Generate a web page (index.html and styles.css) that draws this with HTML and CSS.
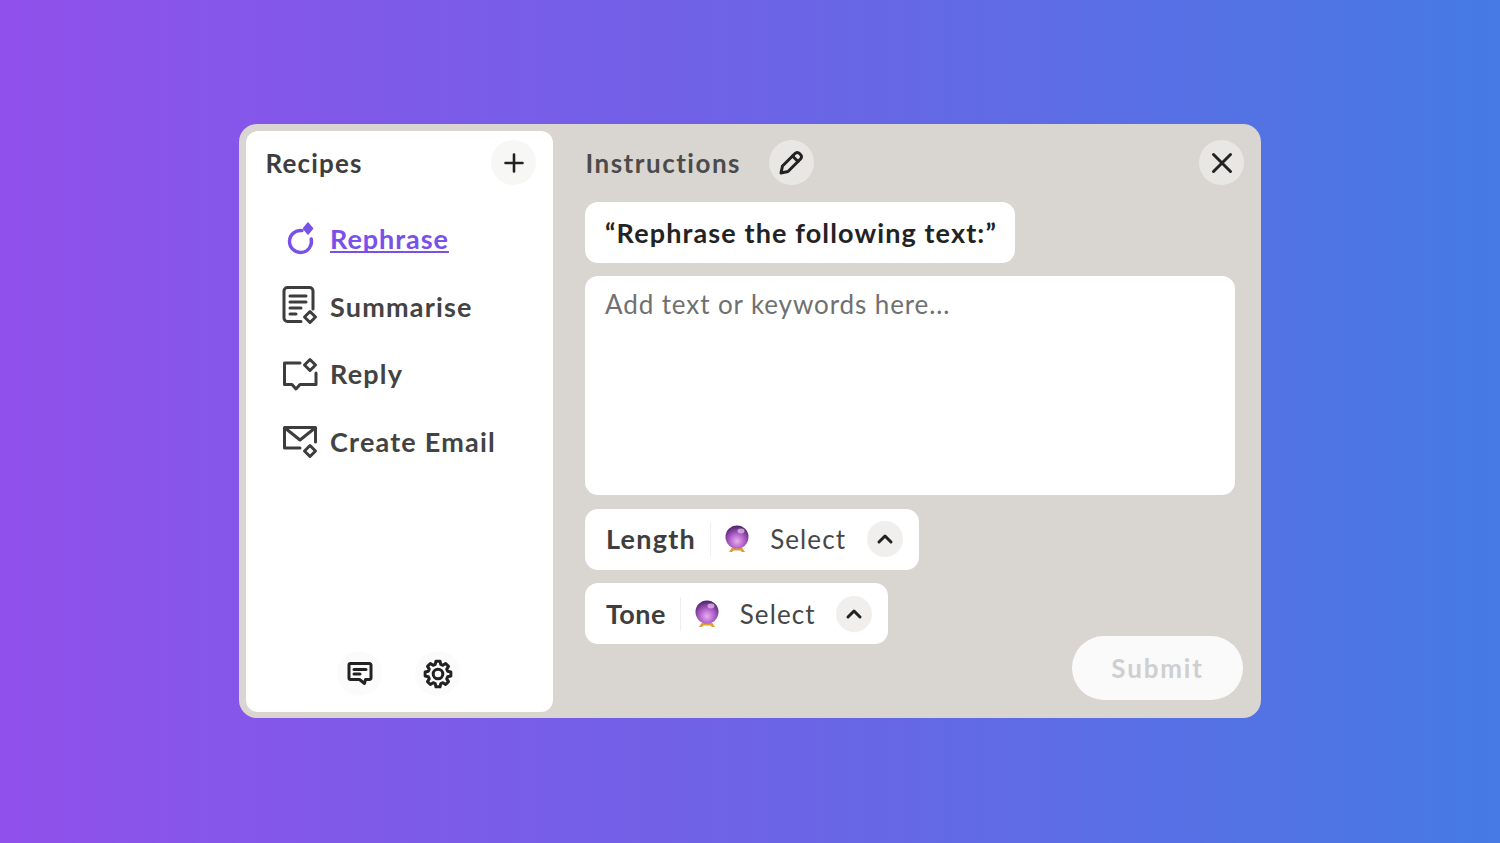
FILE: index.html
```html
<!DOCTYPE html>
<html lang="en">
<head>
<meta charset="utf-8">
<title>Recipes</title>
<link rel="stylesheet" href="styles.css">
</head>
<body>
<svg class="defs" width="0" height="0" aria-hidden="true">
  <defs>
    <radialGradient id="orb" cx="0.5" cy="0.68" r="0.68">
      <stop offset="0" stop-color="#e8b0ee"/>
      <stop offset="0.5" stop-color="#ad5cc8"/>
      <stop offset="1" stop-color="#4a2064"/>
    </radialGradient>
    <symbol id="ball" viewBox="0 0 24 28">
      <path d="M7 22.500h10l3 4.500h-3l-1.500-1.500h-7L7 27H4z" fill="#dd9f2e"/>
      <circle cx="12" cy="12" r="11.500" fill="url(#orb)"/>
      <ellipse cx="16" cy="6" rx="3.500" ry="2.400" fill="#e9c7ef" opacity=".7"/>
    </symbol>
  </defs>
</svg>
<main class="window">
  <aside class="sidebar">
    <header class="side-head">
      <h2 class="title">Recipes</h2>
      <button class="round round-light" aria-label="Add">
        <svg width="24" height="24" viewBox="0 0 24 24" class="ico"><path d="M12 3.500v17M3.500 12h17"/></svg>
      </button>
    </header>
    <nav class="recipes">
      <a class="recipe active">
        <svg width="40" height="40" viewBox="0 0 40 40" class="ico thick">
          <path d="M21 11.600A11 11 0 1 0 30.200 20"/>
          <path d="M27 4l4.500 5.500L27 15l-4.500-5.500z" class="fillme"/>
        </svg>
        <span>Rephrase</span>
      </a>
      <a class="recipe">
        <svg width="40" height="40" viewBox="0 0 40 40" class="ico dark">
          <path d="M20 35.500H6.500a3.500 3.500 0 0 1-3.500-3.500V5a3.500 3.500 0 0 1 3.500-3.500h22A3.500 3.500 0 0 1 32 5v18"/>
          <path d="M9 10h16M9 16h16M9 22h11M9 28h6"/>
          <path d="M29 25.500l5.500 5.500-5.500 5.500-5.500-5.500z"/>
        </svg>
        <span>Summarise</span>
      </a>
      <a class="recipe">
        <svg width="40" height="40" viewBox="0 0 40 40" class="ico dark">
          <path d="M19 9H3.500v21.500h7.500l4 4.500 4-4.500H35V19"/>
          <path d="M29 5.500l5.500 5.500-5.500 5.500-5.500-5.500z"/>
        </svg>
        <span>Reply</span>
      </a>
      <a class="recipe">
        <svg width="40" height="40" viewBox="0 0 40 40" class="ico dark">
          <path d="M19 26H3.500V5.500h31V20"/>
          <path d="M4 6l15 12 15-12"/>
          <path d="M29 23.500l5.500 5.500-5.500 5.500-5.500-5.500z"/>
        </svg>
        <span>Create Email</span>
      </a>
    </nav>
    <footer class="side-foot">
      <button class="round round-light" aria-label="Feedback">
        <svg width="28" height="28" viewBox="0 0 28 28" class="ico heavy">
          <path d="M4.500 3.500h19a1.500 1.500 0 0 1 1.500 1.500v13a1.500 1.500 0 0 1-1.500 1.500h-4l-1 4-5-4h-9A1.500 1.500 0 0 1 3 18V5a1.500 1.500 0 0 1 1.500-1.500z"/>
          <path d="M8 9.500h12M8 14h6"/>
        </svg>
      </button>
      <button class="round round-light" aria-label="Settings">
        <svg width="30" height="30" viewBox="0 0 30 30" class="ico heavy">
          <path d="M12.970 2.160h4.060l.73 3.230 2.090.860 2.790-1.770 2.880 2.880-1.770 2.790.860 2.090 3.230.730v4.060l-3.230.730-.860 2.090 1.770 2.790-2.880 2.880-2.790-1.770-2.090.860-.730 3.230h-4.060l-.730-3.230-2.090-.860-2.790 1.770-2.880-2.880 1.770-2.790-.860-2.090-3.230-.730v-4.060l3.230-.730.860-2.090-1.770-2.790 2.880-2.880 2.790 1.770 2.090-.860z"/>
          <circle cx="15" cy="15" r="4.800"/>
        </svg>
      </button>
    </footer>
  </aside>
  <section class="panel">
    <header class="panel-head">
      <h2 class="title title-muted">Instructions</h2>
      <button class="round round-tint" aria-label="Edit">
        <svg width="28" height="28" viewBox="0 0 28 28" class="ico heavy">
          <path d="M4 24l1.500-7L18 4.500a3 3 0 0 1 4.500 0l1 1a3 3 0 0 1 0 4.500L11 22.500z"/>
          <path d="M15.500 7l5.500 5.500"/>
        </svg>
      </button>
      <button class="round round-tint close" aria-label="Close">
        <svg width="24" height="24" viewBox="0 0 24 24" class="ico heavy"><path d="M3.500 3.500l17 17M20.500 3.500l-17 17"/></svg>
      </button>
    </header>
    <div class="prompt">“Rephrase the following text:”</div>
    <div class="input">Add text or keywords here...</div>
    <div class="chip">
      <span class="chip-label">Length</span>
      <span class="chip-value">
        <svg class="orb" width="24" height="28"><use href="#ball"/></svg>
        <span class="chip-text">Select</span>
      </span>
      <button class="round round-small" aria-label="Open">
        <svg width="18" height="18" viewBox="0 0 18 18" class="ico heavy"><path d="M3 12l6-6 6 6"/></svg>
      </button>
    </div>
    <div class="last-row">
      <div class="chip">
        <span class="chip-label chip-label-tight">Tone</span>
        <span class="chip-value">
          <svg class="orb" width="24" height="28"><use href="#ball"/></svg>
          <span class="chip-text">Select</span>
        </span>
        <button class="round round-small" aria-label="Open">
          <svg width="18" height="18" viewBox="0 0 18 18" class="ico heavy"><path d="M3 12l6-6 6 6"/></svg>
        </button>
      </div>
      <button class="submit">Submit</button>
    </div>
  </section>
</main>
</body>
</html>
```

FILE: styles.css
```css
* { box-sizing: border-box; }
html, body { height: 100%; }
body {
  margin: 0;
  padding-bottom: 1px;
  display: flex;
  align-items: center;
  justify-content: center;
  background: linear-gradient(90deg, #9050eb 0%, #6d63e6 50%, #467ae4 100%);
  font-family: Lato, "Open Sans", sans-serif;
  color: #3e3e3e;
}
.defs { position: absolute; }
button { font: inherit; border: 0; padding: 0; cursor: pointer; }

.window {
  width: 1022px;
  height: 594px;
  display: flex;
  padding: 7px 0 6px 7px;
  background: #d9d6d2;
  border-radius: 18px;
}

.sidebar {
  width: 307px;
  display: flex;
  flex-direction: column;
  background: #fff;
  border-radius: 12px;
  padding: 9px 17px 16px 19.500px;
}
.side-head { display: flex; align-items: center; justify-content: space-between; }
.title { margin: 0; font-size: 26px; font-weight: 700; letter-spacing: 1.150px; color: #3d3d3d; }
.title-muted { color: #4b4b4b; letter-spacing: 1.500px; margin-left: .5px; }

.round {
  width: 45px;
  height: 45px;
  flex: none;
  border-radius: 50%;
  display: flex;
  align-items: center;
  justify-content: center;
}
.round-light { background: #f7f7f6; }
.round-tint { background: #e9e7e4; }
.round-small { width: 36px; height: 36px; background: #f0efee; }

.ico { fill: none; stroke: #222; stroke-width: 2.600; stroke-linecap: round; stroke-linejoin: round; }
.ico.heavy { stroke-width: 3; }
.ico.dark { stroke: #3d3d3d; stroke-width: 3; }
.ico.thick { stroke: #7a50ea; stroke-width: 3.400; }
.ico .fillme { fill: #7a50ea; stroke-width: 1.500; }

.recipes {
  display: flex;
  flex-direction: column;
  gap: 27.700px;
  margin-top: 33.500px;
  padding-left: 15.500px;
}
.recipe {
  display: flex;
  align-items: center;
  gap: 9px;
  height: 40px;
  font-size: 27px;
  font-weight: 700;
  letter-spacing: 1.200px;
  color: #434343;
}
.recipe.active { color: #7a50ea; letter-spacing: .950px; }
.recipe.active span {
  text-decoration: underline;
  text-decoration-thickness: 2px;
  text-decoration-skip-ink: none;
  text-underline-offset: 2px;
}

.side-foot {
  margin-top: auto;
  display: flex;
  justify-content: center;
  gap: 33px;
  padding-right: 4px;
}
.side-foot .round-light { background: #fbfbfb; }

.panel {
  flex: 1;
  display: flex;
  flex-direction: column;
  align-items: flex-start;
  gap: 13.400px;
  padding: 9px 26px 0 32px;
  min-width: 0;
}
.panel-head {
  display: flex;
  align-items: center;
  gap: 28px;
  align-self: stretch;
  margin-right: -9px;
  margin-bottom: 3.600px;
}
.close { margin-left: auto; }

.prompt {
  height: 61px;
  padding: 0 18px 0 20px;
  display: flex;
  align-items: center;
  background: #fff;
  border-radius: 13px;
  font-size: 27px;
  font-weight: 700;
  letter-spacing: 1.120px;
  color: #232323;
}
.input {
  align-self: stretch;
  height: 219px;
  padding: 11.500px 20px;
  background: #fff;
  border-radius: 13px;
  font-size: 26px;
  letter-spacing: .900px;
  color: #707070;
}
.chip {
  height: 61px;
  padding: 0 16px 0 21px;
  display: flex;
  align-items: center;
  background: #fff;
  border-radius: 13px;
}
.chip-label {
  font-size: 27px;
  font-weight: 700;
  letter-spacing: 1.270px;
  color: #3e3e3e;
  padding-right: 14px;
  border-right: 1px solid #efefef;
  line-height: 34px;
}
.chip-label-tight { letter-spacing: .400px; }
.chip-value {
  display: flex;
  align-items: center;
  gap: 21px;
  padding: 0 20.500px 0 14px;
  font-size: 26px;
  letter-spacing: 1.100px;
  color: #474747;
}
.last-row {
  display: flex;
  justify-content: space-between;
  align-self: stretch;
  margin-right: -8px;
}
.submit {
  width: 171px;
  height: 64px;
  margin-top: 52.600px;
  border-radius: 32px;
  background: #fafafa;
  font-size: 26px;
  font-weight: 700;
  letter-spacing: 1.800px;
  color: #cfcfcf;
}
```
